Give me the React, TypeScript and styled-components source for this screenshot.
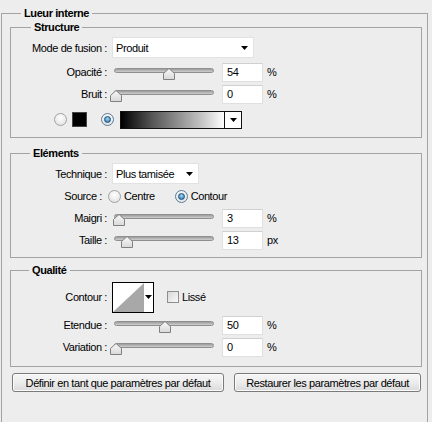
import React from 'react';
import styled, { createGlobalStyle, css } from 'styled-components';

const BG = '#ededed';

const Global = createGlobalStyle`
  html, body { margin: 0; padding: 0; background: ${BG}; }
  body {
    font-family: "Liberation Sans", Arial, sans-serif;
    font-size: 11px;
    letter-spacing: -0.4px;
    color: #000;
  }
  * { box-sizing: border-box; }
`;

const Page = styled.div`
  width: 432px;
  height: 422px;
  overflow: hidden;
  padding-top: 13px;
`;

const OuterBox = styled.section`
  margin-left: 1px;
  width: 427px;
  height: 440px;
  border: 1px solid #a3a3a3;
  padding: 0 5px 0 8px;
`;

const GroupBox = styled.section<{ $mt: number; $pt: number; $pb: number }>`
  margin-top: ${p => p.$mt}px;
  border: 1px solid #a3a3a3;
  padding: 0 0 ${p => p.$pb}px 0;
  & > :nth-child(2) {
    margin-top: ${p => p.$pt}px;
  }
`;

const Caption = styled.div<{ $ml: number }>`
  width: max-content;
  margin: -8px 0 0 ${p => p.$ml}px;
  padding: 0 3px;
  height: 14px;
  line-height: 14px;
  font-weight: bold;
  background: ${BG};
`;

const Row = styled.div<{ $h: number; $mt?: number }>`
  display: flex;
  align-items: center;
  height: ${p => p.$h}px;
  margin-top: ${p => p.$mt ?? 0}px;
`;

const Label = styled.span<{ $pr?: number }>`
  width: 96px;
  flex: none;
  text-align: right;
  padding-right: ${p => p.$pr ?? 0}px;
  white-space: nowrap;
`;

const SelectBox = styled.div<{ $w: number }>`
  margin-left: 5px;
  width: ${p => p.$w}px;
  height: 21px;
  background: #fff;
  border: 1px solid #e2e2e2;
  display: flex;
  align-items: center;
  justify-content: space-between;
  padding: 0 5px 0 3px;
`;

const Arrow = () => (
  <svg width="7" height="4" viewBox="0 0 7 4">
    <polygon points="0,0 7,0 3.5,4" fill="#000" />
  </svg>
);

const SliderWrap = styled.div`
  position: relative;
  margin-left: 3px;
  margin-top: 4px;
  width: 108px;
  height: 12px;
  flex: none;
`;

const Track = styled.div`
  position: absolute;
  left: 4px;
  right: 4px;
  top: 0;
  height: 5px;
  border-radius: 3px;
  border: 1px solid #8f8f8f;
  background: linear-gradient(#9c9c9c, #cfcfcf);
`;

const Thumb = styled.svg`
  position: absolute;
  top: 0;
`;

const Slider = ({ value }: { value: number }) => (
  <SliderWrap>
    <Track />
    <Thumb width="12" height="12" viewBox="0 0 12 12" style={{ left: `${value * 98}px` }}>
      <defs>
        <linearGradient id="tg" x1="0" y1="0" x2="0" y2="1">
          <stop offset="0" stopColor="#fafafa" />
          <stop offset="1" stopColor="#d8d8d8" />
        </linearGradient>
      </defs>
      <polygon points="6,0.5 11.5,5.5 11.5,11.5 0.5,11.5 0.5,5.5" fill="url(#tg)" stroke="#808080" strokeWidth="1" />
    </Thumb>
  </SliderWrap>
);

const NumInput = styled.div`
  margin-left: 4px;
  width: 41px;
  height: 19px;
  background: #fff;
  border: 1px solid #e0e0e0;
  border-top-color: #d0d0d0;
  padding-left: 4px;
  line-height: 17px;
  flex: none;
`;

const Unit = styled.span`
  margin-left: 4px;
`;

const Radio = styled.span<{ $on?: boolean; $ml?: number }>`
  position: relative;
  flex: none;
  width: 13px;
  height: 13px;
  margin-left: ${p => p.$ml ?? 0}px;
  border-radius: 50%;
  border: 1px solid #a2a2a2;
  background: radial-gradient(circle at 50% 35%, #ffffff, #dcdcdc);
  ${p =>
    p.$on &&
    css`
      border-color: #5d7c99;
      &::after {
        content: '';
        position: absolute;
        inset: 2px;
        border-radius: 50%;
        border: 1px solid #1d4d7a;
        background: radial-gradient(circle at 50% 35%, #9ad8fa, #2a6ea8);
      }
    `}
`;

const RadioText = styled.span<{ $ml: number }>`
  margin-left: ${p => p.$ml}px;
`;

const ColorRow = styled(Row)`
  padding-left: 43px;
`;

const Swatch = styled.div`
  margin-left: 5px;
  width: 15px;
  height: 15px;
  background: #000;
  border: 1px solid #444;
`;

const GradientBox = styled.div`
  margin-left: 6px;
  width: 122px;
  height: 18px;
  border: 1px solid #111;
  display: flex;
`;

const GradientFill = styled.div`
  flex: 1;
  background: linear-gradient(to right, #000 0%, #555 30%, #c8c8c8 80%, #fff 100%);
`;

const ArrowCell = styled.div`
  width: 17px;
  border-left: 1px solid #111;
  background: #fff;
  display: flex;
  align-items: center;
  justify-content: center;
`;

const ContourBox = styled.div`
  margin-left: 5px;
  width: 42px;
  height: 31px;
  border: 1px solid #000;
  background: #fff;
  display: flex;
`;

const ContourArrow = styled.div`
  flex: 1;
  display: flex;
  align-items: center;
  justify-content: center;
`;

const Check = styled.span`
  margin-left: 13px;
  width: 12px;
  height: 12px;
  border: 1px solid #8e8e8e;
  background: linear-gradient(135deg, #d8d8d8, #f8f8f8);
  flex: none;
`;

const Buttons = styled.div`
  display: flex;
  margin-top: 6px;
  padding-left: 2px;
  gap: 10px;
`;

const Button = styled.button<{ $w: number }>`
  width: ${p => p.$w}px;
  height: 19px;
  padding: 0;
  border: 1px solid #7a7a7a;
  border-radius: 3px;
  background: linear-gradient(#f7f7f7 0%, #ececec 50%, #dadada 100%);
  font-family: inherit;
  font-size: 11px;
  letter-spacing: -0.4px;
  color: #000;
  box-shadow: inset 0 0 0 1px #fbfbfb;
`;

export default function App() {
  return (
    <Page>
      <Global />
      <OuterBox>
        <Caption $ml={11}>Lueur interne</Caption>
        <GroupBox $mt={7} $pt={2} $pb={6}>
          <Caption $ml={20}>Structure</Caption>
          <Row $h={23}>
            <Label>Mode de fusion :</Label>
            <SelectBox $w={142}>
              <span>Produit</span>
              <Arrow />
            </SelectBox>
          </Row>
          <Row $h={22} $mt={2}>
            <Label>Opacité :</Label>
            <Slider value={0.54} />
            <NumInput>54</NumInput>
            <Unit>%</Unit>
          </Row>
          <Row $h={22}>
            <Label>Bruit :</Label>
            <Slider value={0} />
            <NumInput>0</NumInput>
            <Unit>%</Unit>
          </Row>
          <ColorRow $h={23} $mt={3}>
            <Radio />
            <Swatch />
            <Radio $on $ml={14} />
            <GradientBox>
              <GradientFill />
              <ArrowCell>
                <Arrow />
              </ArrowCell>
            </GradientBox>
          </ColorRow>
        </GroupBox>

        <GroupBox $mt={15} $pt={2} $pb={6}>
          <Caption $ml={19}>Eléments</Caption>
          <Row $h={23}>
            <Label>Technique :</Label>
            <SelectBox $w={87}>
              <span>Plus tamisée</span>
              <Arrow />
            </SelectBox>
          </Row>
          <Row $h={22}>
            <Label $pr={5}>Source :</Label>
            <Radio $ml={1} />
            <RadioText $ml={3}>Centre</RadioText>
            <Radio $on $ml={20} />
            <RadioText $ml={3}>Contour</RadioText>
          </Row>
          <Row $h={22}>
            <Label>Maigri :</Label>
            <Slider value={0.03} />
            <NumInput>3</NumInput>
            <Unit>%</Unit>
          </Row>
          <Row $h={22}>
            <Label>Taille :</Label>
            <Slider value={0.11} />
            <NumInput>13</NumInput>
            <Unit>px</Unit>
          </Row>
        </GroupBox>

        <GroupBox $mt={12} $pt={3} $pb={8}>
          <Caption $ml={18}>Qualité</Caption>
          <Row $h={34}>
            <Label>Contour :</Label>
            <ContourBox>
              <svg width="31" height="29" viewBox="0 0 31 29">
                <polygon points="0,29 31,0 31,29" fill="#a8a8a8" />
              </svg>
              <ContourArrow>
                <Arrow />
              </ContourArrow>
            </ContourBox>
            <Check />
            <RadioText $ml={3}>Lissé</RadioText>
          </Row>
          <Row $h={22}>
            <Label>Etendue :</Label>
            <Slider value={0.5} />
            <NumInput>50</NumInput>
            <Unit>%</Unit>
          </Row>
          <Row $h={22}>
            <Label>Variation :</Label>
            <Slider value={0} />
            <NumInput>0</NumInput>
            <Unit>%</Unit>
          </Row>
        </GroupBox>

        <Buttons>
          <Button $w={212}>Définir en tant que paramètres par défaut</Button>
          <Button $w={187}>Restaurer les paramètres par défaut</Button>
        </Buttons>
      </OuterBox>
    </Page>
  );
}
